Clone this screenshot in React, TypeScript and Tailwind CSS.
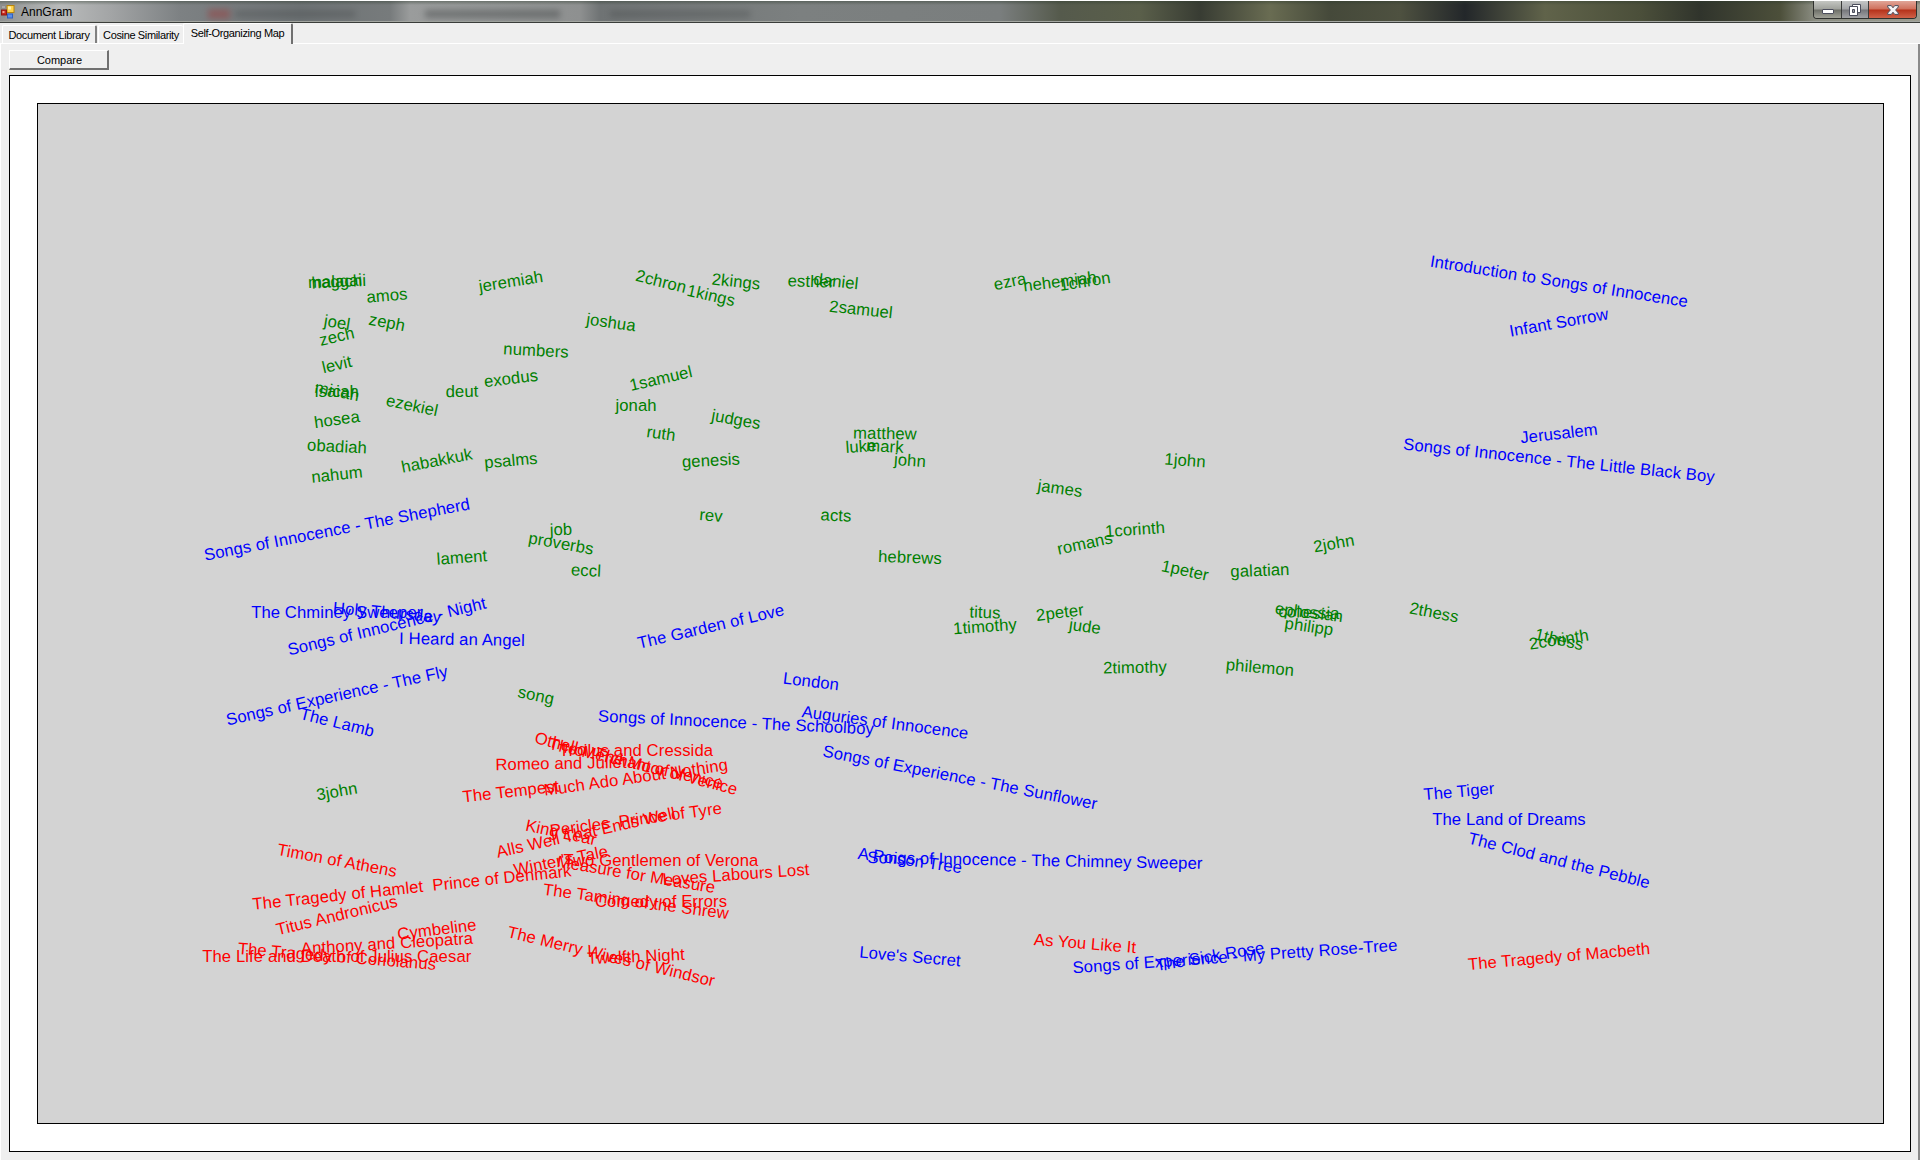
type Tone = "g" | "b" | "r";
type Node = [text: string, col: number, row: number, angle: number, tone: Tone];

const toneClass: Record<Tone, string> = {
  g: "text-[#008000]",
  b: "text-[#0000ff]",
  r: "text-[#ff0000]",
};

const nodes: Node[] = [
  ["malachi", 0, 0, -2, "g"],
  ["haggai", 0, 0, -4, "g"],
  ["amos", 2, 1, -5, "g"],
  ["jeremiah", 7, 0, -9, "g"],
  ["zeph", 2, 3, 11, "g"],
  ["joel", 0, 3, 9, "g"],
  ["zech", 0, 4, -13, "g"],
  ["levit", 0, 6, -13, "g"],
  ["micah", 0, 8, 11, "g"],
  ["isaiah", 0, 8, 0, "g"],
  ["hosea", 0, 10, -8, "g"],
  ["obadiah", 0, 12, 3, "g"],
  ["nahum", 0, 14, -6, "g"],
  ["habakkuk", 4, 13, -11, "g"],
  ["psalms", 7, 13, -5, "g"],
  ["ezekiel", 3, 9, 12, "g"],
  ["deut", 5, 8, -1, "g"],
  ["exodus", 7, 7, -7, "g"],
  ["numbers", 8, 5, 3, "g"],
  ["joshua", 11, 3, 8, "g"],
  ["2chron", 13, 0, 14, "g"],
  ["1kings", 15, 1, 13, "g"],
  ["2kings", 16, 0, 6, "g"],
  ["esther", 19, 0, 2, "g"],
  ["daniel", 20, 0, 6, "g"],
  ["2samuel", 21, 2, 6, "g"],
  ["ezra", 27, 0, -12, "g"],
  ["nehemiah", 29, 0, -7, "g"],
  ["1chron", 30, 0, -9, "g"],
  ["1samuel", 13, 7, -13, "g"],
  ["jonah", 12, 9, 0, "g"],
  ["ruth", 13, 11, 8, "g"],
  ["judges", 16, 10, 10, "g"],
  ["matthew", 22, 11, 1, "g"],
  ["luke", 21, 12, -4, "g"],
  ["mark", 22, 12, 3, "g"],
  ["john", 23, 13, 4, "g"],
  ["genesis", 15, 13, -3, "g"],
  ["rev", 15, 17, 5, "g"],
  ["acts", 20, 17, 3, "g"],
  ["james", 29, 15, 8, "g"],
  ["1john", 34, 13, 4, "g"],
  ["1corinth", 32, 18, -4, "g"],
  ["romans", 30, 19, -12, "g"],
  ["1peter", 34, 21, 12, "g"],
  ["galatian", 37, 21, -2, "g"],
  ["2john", 40, 19, -10, "g"],
  ["2thess", 44, 24, 11, "g"],
  ["ephesian", 39, 24, 7, "g"],
  ["colossia", 39, 24, 2, "g"],
  ["philipp", 39, 25, 8, "g"],
  ["titus", 26, 24, 2, "g"],
  ["1timothy", 26, 25, -4, "g"],
  ["2peter", 29, 24, -7, "g"],
  ["jude", 30, 25, 8, "g"],
  ["2timothy", 32, 28, -1, "g"],
  ["philemon", 37, 28, 5, "g"],
  ["2corinth", 49, 26, -9, "g"],
  ["1thess", 49, 26, 13, "g"],
  ["hebrews", 23, 20, 2, "g"],
  ["job", 9, 18, -2, "g"],
  ["proverbs", 9, 19, 10, "g"],
  ["lament", 5, 20, -4, "g"],
  ["eccl", 10, 21, 3, "g"],
  ["song", 8, 30, 12, "g"],
  ["3john", 0, 37, -10, "g"],
  ["Songs of Innocence - The Shepherd", 0, 18, -11, "b"],
  ["The Chminey Sweeper", 0, 24, 0, "b"],
  ["Holy Thursday", 2, 24, 5, "b"],
  ["Songs of Innocence - Night", 2, 25, -13.5, "b"],
  ["I Heard an Angel", 5, 26, 1, "b"],
  ["Songs of Experience - The Fly", 0, 30, -12.5, "b"],
  ["The Lamb", 0, 32, 14, "b"],
  ["The Garden of Love", 15, 25, -13, "b"],
  ["London", 19, 29, 7, "b"],
  ["Songs of Innocence - The Schoolboy", 16, 32, 2.7, "b"],
  ["Auguries of Innocence", 22, 32, 7.5, "b"],
  ["Songs of Experience - The Sunflower", 25, 36, 11, "b"],
  ["A Poison Tree", 23, 42, 8, "b"],
  ["Songs of Innocence - The Chimney Sweeper", 28, 42, 1, "b"],
  ["Love's Secret", 23, 49, 5, "b"],
  ["Songs of Experience - My Pretty Rose-Tree", 36, 49, -4, "b"],
  ["The Sick Rose", 35, 49, -9.5, "b"],
  ["The Tiger", 45, 37, -5, "b"],
  ["The Land of Dreams", 47, 39, 0, "b"],
  ["The Clod and the Pebble", 49, 42, 14, "b"],
  ["Introduction to Songs of Innocence", 49, 0, 9, "b"],
  ["Infant Sorrow", 49, 3, -10, "b"],
  ["Jerusalem", 49, 11, -6.5, "b"],
  ["Songs of Innocence - The Little Black Boy", 49, 13, 6, "b"],
  ["Othello  The Moor of Venice", 12, 35, 14.5, "r"],
  ["The Merchant of Venice", 12, 35, 13, "r"],
  ["Troilus and Cressida", 12, 34, 0, "r"],
  ["Romeo and Juliet", 9, 35, -1, "r"],
  ["Much Ado About Nothing", 12, 36, -8, "r"],
  ["The Tempest", 7, 37, -6.5, "r"],
  ["King Lear", 9, 40, 12, "r"],
  ["Pericles  Prince of Tyre", 12, 39, -7.5, "r"],
  ["Alls Well That Ends Well", 10, 40, -12.5, "r"],
  ["Winter's Tale", 9, 42, -11.5, "r"],
  ["Two Gentlemen of Verona", 13, 42, 0, "r"],
  ["Measure for Measure", 12, 43, 9.5, "r"],
  ["Loves Labours Lost", 16, 43, -4, "r"],
  ["The Taming of the Shrew", 12, 45, 7.5, "r"],
  ["Comedy of Errors", 13, 45, 0, "r"],
  ["The Merry Wives of Windsor", 11, 49, 13.5, "r"],
  ["Twelfth Night", 12, 49, -2.5, "r"],
  ["Timon of Athens", 0, 42, 10.5, "r"],
  ["The Tragedy of Hamlet  Prince of Denmark", 3, 44, -6, "r"],
  ["Titus Andronicus", 0, 46, -13.5, "r"],
  ["Cymbeline", 4, 47, -7, "r"],
  ["Anthony and Cleopatra", 2, 48, -3.5, "r"],
  ["The Life and Death of Julius Caesar", 0, 49, 0, "r"],
  ["The Tragedy of Coriolanus", 0, 49, 4.6, "r"],
  ["As You Like It", 30, 48, 4.5, "r"],
  ["The Tragedy of Macbeth", 49, 49, -5, "r"],
];

// Offset of the first map cell inside the canvas and the size of one cell.
const originX = 298.8;
const originY = 178.1;
const stepX = 24.94;
const stepY = 13.78;

function MapLabel({ node }: { node: Node }) {
  const [text, col, row, angle, tone] = node;
  return (
    <span
      className={`absolute whitespace-pre text-[16.67px] leading-[18px] tracking-[0.1px] ${toneClass[tone]}`}
      style={{
        left: originX + col * stepX,
        top: originY + row * stepY,
        transform: `translate(-50%, -50%) rotate(${angle}deg)`,
      }}
    >
      {text}
    </span>
  );
}

function AppIcon() {
  return (
    <svg width="14" height="14" viewBox="0 0 14 14" className="ml-[1px] mt-[4px] shrink-0">
      <rect x="0.5" y="0.5" width="4" height="3" fill="#a9a9a9" stroke="#8c8c8c" />
      <rect x="6" y="0.5" width="7" height="7" fill="#ffd34e" stroke="#b8860b" />
      <rect x="7" y="1.5" width="3" height="3" fill="#fff0a8" />
      <rect x="0.5" y="5" width="5" height="5" fill="#c8281c" stroke="#8e1710" />
      <rect x="1.5" y="6" width="2" height="2" fill="#f0a090" />
      <rect x="6.5" y="9" width="5" height="4" fill="#5a8ee8" stroke="#2f5fc0" />
      <rect x="1" y="11" width="3" height="2" fill="#8f8f8f" />
    </svg>
  );
}

function TitleBar() {
  return (
    <header className="relative flex h-[23px] shrink-0 overflow-hidden border-t border-b border-t-white border-b-[#3a3d3a] bg-[linear-gradient(90deg,#8f9191_0px,#b9bbbb_60px,#a3a5a6_110px,#7d8183_180px,#6d7274_300px,#777b7c_390px,#9a9c9c_410px,#8e9090_580px,#6f7374_600px,#7c8080_800px,#7a7e7e_1000px,#555a4c_1060px,#5a5f4a_1140px,#383c33_1200px,#696c52_1270px,#45493a_1330px,#4e5140_1400px,#23272a_1465px,#60634a_1545px,#4b4f3a_1640px,#30342c_1700px,#4c4f3a_1780px,#8b8d82_1815px,#9b9c90_1920px)]">
      <div className="pointer-events-none absolute inset-x-0 top-0 h-[4px] bg-[linear-gradient(#2a382a66,#2a382a00)]" />
      <div className="pointer-events-none absolute inset-x-0 bottom-0 h-px bg-[#a4a7a2]" />
      <div className="pointer-events-none absolute left-[208px] top-[8px] h-[10px] w-[22px] bg-[#a03030] opacity-40 blur-[3px]" />
      <div className="pointer-events-none absolute left-[235px] top-[10px] h-[6px] w-[120px] bg-[#35393a] opacity-30 blur-[3px]" />
      <div className="pointer-events-none absolute left-[425px] top-[9px] h-[8px] w-[135px] bg-[#35393a] opacity-40 blur-[3px]" />
      <div className="pointer-events-none absolute left-[610px] top-[10px] h-[6px] w-[140px] bg-[#35393a] opacity-30 blur-[3px]" />
      <AppIcon />
      <h1 className="relative ml-[6px] mt-[3px] text-[12px] leading-[16px] text-black">AnnGram</h1>
      <div className="relative ml-auto mr-[3px] flex h-[18px] shrink-0 overflow-hidden rounded-b-[4px] border border-t-0 border-[#2f312e]">
        <div className="flex w-[28px] items-center justify-center border-r border-[#3a3b3a] bg-[linear-gradient(#c4c6c2,#9fa19b_48%,#6d6f68_52%,#a0a197)] pt-[4px]">
          <svg width="12" height="5" viewBox="0 0 12 5">
            <rect x="0.5" y="0.5" width="11" height="4" rx="0.5" fill="#fff" stroke="#4c4e5c" />
          </svg>
        </div>
        <div className="flex w-[27px] items-center justify-center border-r border-[#3a3b3a] bg-[linear-gradient(#c4c6c6,#a2a3a5_48%,#75767a_52%,#a0a1a4)]">
          <svg width="12" height="12" viewBox="0 0 12 12">
            <path d="M3.5 .5h8v8h-8z" fill="#fff" stroke="#4c4e5c" />
            <path d="M.5 2.5h8v9h-8z" fill="#fff" stroke="#4c4e5c" />
            <path d="M3.5 5.5h2v3h-2z" fill="#9c9da4" stroke="#4c4e5c" />
          </svg>
        </div>
        <div className="flex w-[47px] items-center justify-center bg-[linear-gradient(#e0a598,#cf6f5b_48%,#b5311a_52%,#cf6148)]">
          <svg width="12" height="10" viewBox="0 0 12 10">
            <path
              d="M.7 .6H4.3L6 2.8L7.7 .6H11.3V2L8.6 5L11.3 8V9.4H7.7L6 7.2L4.3 9.4H.7V8L3.4 5L.7 2Z"
              fill="#f4f4f6"
              stroke="#4c4e5c"
            />
          </svg>
        </div>
      </div>
    </header>
  );
}

function Tabs() {
  return (
    <nav className="flex h-[21px] shrink-0 items-end border-b border-white pl-[2px] text-[11px] tracking-[-0.36px] text-black">
      <div className="flex h-[18px] w-[95px] items-center justify-center whitespace-nowrap rounded-t-[2px] border-l border-r-2 border-t border-l-white border-r-[#808080] border-t-white pt-px">
        Document Library
      </div>
      <div className="ml-[1px] flex h-[18px] w-[85px] items-center justify-center whitespace-nowrap rounded-t-[2px] border-l border-t border-white pt-px">
        Cosine Similarity
      </div>
      <div className="-mb-px flex h-[21px] w-[110px] items-center justify-center whitespace-nowrap rounded-t-[2px] border-l border-r-2 border-t border-l-white border-r-[#707070] border-t-white bg-[#efefef] pb-[2px]">
        Self-Organizing Map
      </div>
    </nav>
  );
}

export default function App() {
  return (
    <div className="flex h-[1160px] w-[1920px] flex-col overflow-hidden bg-[#efefef] font-['Liberation_Sans',Arial,sans-serif]">
      <TitleBar />
      <Tabs />
      <main className="flex min-h-0 flex-1 flex-col border-l border-r-2 border-l-white border-r-[#8a8a8a] pb-[8px] pl-[8px] pr-[7px] pt-[6px]">
        <button className="h-[20px] w-[100px] shrink-0 border-b-2 border-l border-r-2 border-t border-b-[#707070] border-l-white border-r-[#707070] border-t-white pl-[2px] text-[11px] leading-[18px] text-black">
          Compare
        </button>
        <section className="mt-[5px] flex min-h-0 flex-1 border border-black bg-white p-[27px] pr-[26px]">
          <div className="relative flex-1 border border-black bg-[#d3d3d3]">
            {nodes.map((node) => (
              <MapLabel key={node[0]} node={node} />
            ))}
          </div>
        </section>
      </main>
    </div>
  );
}
